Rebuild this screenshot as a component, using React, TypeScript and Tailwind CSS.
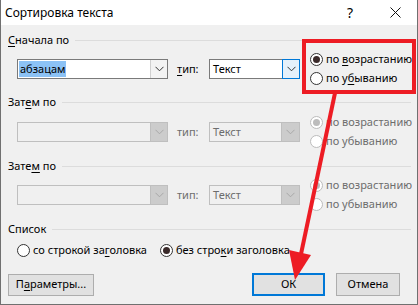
import React from 'react';

const FONT = { fontFamily: '"Noto Sans", "Open Sans", sans-serif' };

function Chevron({ disabled }: { disabled?: boolean }) {
  return (
    <svg width="9" height="6" viewBox="0 0 9 6">
      <polyline points="0.5,0.8 4.5,4.8 8.5,0.8" fill="none" stroke={disabled ? '#a8a8a8' : '#333'} strokeWidth="1" />
    </svg>
  );
}

function Radio({ checked, disabled }: { checked?: boolean; disabled?: boolean }) {
  return (
    <div
      className={`w-[13px] h-[13px] rounded-full border bg-white flex items-center justify-center shrink-0 ${
        disabled ? 'border-[#bcbcbc]' : 'border-[#333333]'
      }`}
    >
      {checked && (
        <div className={`w-[7px] h-[7px] rounded-full ${disabled ? 'bg-[#bcbcbc]' : 'bg-[#3a2a2a]'}`} />
      )}
    </div>
  );
}

function U({ children }: { children: React.ReactNode }) {
  return <span className="underline decoration-1 underline-offset-[2px]">{children}</span>;
}

function Header({ children }: { children: React.ReactNode }) {
  return (
    <div className="flex items-center h-4 pr-[6px]">
      <span className="leading-4 whitespace-nowrap">{children}</span>
      <div className="flex-1 h-px bg-[#dcdcdc] ml-[6px]" />
    </div>
  );
}

function SortRow({ enabled }: { enabled?: boolean }) {
  const txt = enabled ? 'text-black' : 'text-[#6d6d6d]';
  return (
    <div className="flex items-center h-[38px] pl-[9px]">
      {/* field */}
      <div
        className={`flex w-[151px] h-[20px] border ${
          enabled ? 'border-[#7a7a7a] bg-white' : 'border-[#bfbfbf] bg-[#f0f0f0]'
        }`}
      >
        <div className="flex-1 flex items-center pl-[1px]">
          {enabled && <span className="bg-[#8cc2f5] leading-[16px] px-[1px]">абзацам</span>}
        </div>
        <div
          className={`w-[17px] flex items-center justify-center border-l ${
            enabled ? 'border-[#d0d0d0] bg-[#f3f3f3]' : 'border-[#bfbfbf] bg-[#cccccc]'
          }`}
        >
          <Chevron disabled={!enabled} />
        </div>
      </div>
      <div className={`w-[41px] pl-[9px] ${txt}`}>{enabled ? <><U>т</U>ип:</> : 'тип:'}</div>
      {/* type */}
      <div
        className={`flex w-[91px] h-[20px] border ${
          enabled ? 'border-[#7a7a7a] bg-white' : 'border-[#bfbfbf] bg-[#f0f0f0]'
        }`}
      >
        <div className={`flex-1 flex items-center pl-[3px] ${txt}`}>Текст</div>
        <div
          className={`w-[18px] flex items-center justify-center ${
            enabled ? 'border border-[#0078d7] bg-[#e5f1fb] -my-px -mr-px' : 'border-l border-[#bfbfbf] bg-[#cccccc]'
          }`}
        >
          <Chevron disabled={!enabled} />
        </div>
      </div>
      {/* order */}
      <div className={`ml-[10px] flex flex-col whitespace-nowrap ${txt}`}>
        <div className="flex items-center h-[19px] gap-[3px]">
          <Radio checked disabled={!enabled} />
          <span>{enabled ? <>по <U>в</U>озрастанию</> : 'по возрастанию'}</span>
        </div>
        <div className="flex items-center h-[19px] gap-[3px]">
          <Radio disabled={!enabled} />
          <span>{enabled ? <>по у<U>б</U>ыванию</> : 'по убыванию'}</span>
        </div>
      </div>
    </div>
  );
}

export default function App() {
  return (
    <div
      className="relative w-[418px] h-[305px] overflow-hidden bg-[#f0f0f0] border-x border-b border-[#707070] text-[11px] text-black"
      style={FONT}
    >
      {/* Title bar */}
      <div className="h-[25px] bg-white flex items-center pl-[4px]">
        <span className="text-[12px] leading-none">Сортировка текста</span>
        <span className="ml-auto text-[14px] leading-none mr-[37px]">?</span>
        <svg width="11" height="11" viewBox="0 0 11 11" className="mr-[16px]">
          <path d="M0.5 0.5 L10.5 10.5 M10.5 0.5 L0.5 10.5" stroke="#111" strokeWidth="1" />
        </svg>
      </div>

      {/* Body */}
      <div className="pl-[7px] flex flex-col">
        <div className="mt-[7px]">
          <Header>
            <U>С</U>начала по
          </Header>
        </div>
        <div className="mt-[2px]">
          <SortRow enabled />
        </div>
        <div className="mt-[6px]">
          <Header>
            Зат<U>е</U>м по
          </Header>
        </div>
        <div className="mt-[3px]">
          <SortRow />
        </div>
        <div className="mt-[7px]">
          <Header>
            Зате<U>м</U> по
          </Header>
        </div>
        <div className="mt-[2px]">
          <SortRow />
        </div>
        <div className="mt-[7px]">
          <Header>Список</Header>
        </div>
        <div className="mt-[5px] h-4 flex items-center pl-[9px] whitespace-nowrap">
          <Radio />
          <span className="ml-[3px]">
            со строкой за<U>г</U>оловка
          </span>
          <div className="ml-[13px]">
            <Radio checked />
          </div>
          <span className="ml-[3px]">
            без стро<U>к</U>и заголовка
          </span>
        </div>
        <div className="mt-[15px] flex items-center">
          <button className="w-[86px] h-[22px] border border-[#adadad] bg-[#e1e1e1] flex items-center justify-center">
            П<U>а</U>раметры...
          </button>
          <button className="ml-auto w-[73px] h-[23px] border-2 border-[#0078d7] bg-[#e1e1e1] flex items-center justify-center">
            ОК
          </button>
          <button className="ml-[11px] mr-[17px] w-[64px] h-[23px] border border-[#adadad] bg-[#e1e1e1] flex items-center justify-center">
            Отмена
          </button>
        </div>
      </div>

      {/* Annotation overlay */}
      <div className="absolute left-[301px] top-[39px] w-[114px] h-[55px] border-4 border-[#ed1c24]" />
      <svg className="absolute left-0 top-0 pointer-events-none" width="418" height="305">
        <line x1="334" y1="93" x2="300" y2="254" stroke="#ed1c24" strokeWidth="4" />
        <polygon points="294,280 310,255 288,250" fill="#ed1c24" />
      </svg>
    </div>
  );
}
